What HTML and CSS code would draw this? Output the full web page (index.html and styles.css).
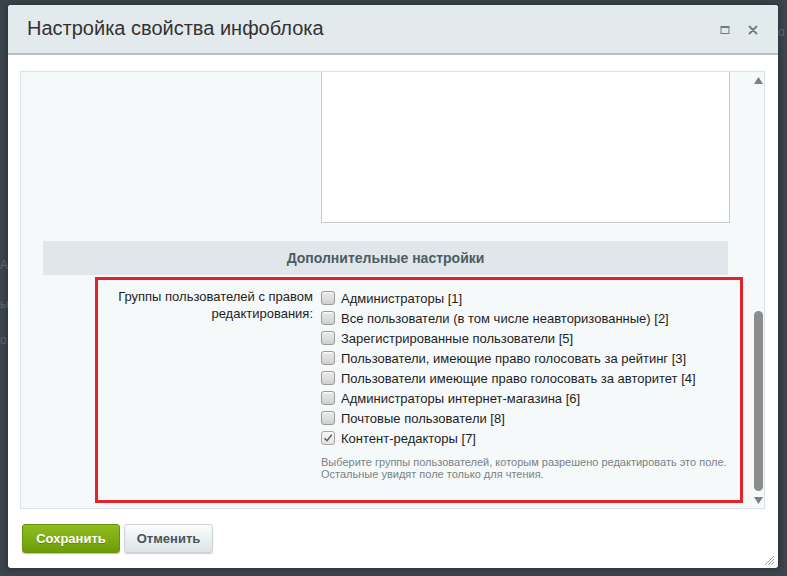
FILE: index.html
```html
<!DOCTYPE html>
<html lang="ru">
<head>
<meta charset="utf-8">
<title>Настройка свойства инфоблока</title>
<link rel="stylesheet" href="styles.css">
</head>
<body>
<div class="page">
  <div class="page-edge left">
    <span class="frag f1">А</span>
    <span class="frag f2">ы</span>
    <span class="frag f3">о</span>
  </div>
  <div class="page-edge right">
    <span class="frag f4">о</span>
  </div>
</div>

<div class="dialog">
  <div class="dialog-head">
    <div class="dialog-title">Настройка свойства инфоблока</div>
    <div class="dialog-tools">
      <svg class="tool" width="10" height="10" viewBox="0 0 10 10"><rect x="1" y="1.5" width="8" height="7" fill="none" stroke="#6f7a82" stroke-width="1"/><rect x="1" y="1" width="8" height="2" fill="#6f7a82"/></svg>
      <svg class="tool" width="10" height="10" viewBox="0 0 10 10"><path d="M1.5 1.5 L8.5 8.5 M8.5 1.5 L1.5 8.5" stroke="#6f7a82" stroke-width="1.8" stroke-linecap="round"/></svg>
    </div>
  </div>

  <div class="dialog-body">
    <div class="content-box">
      <div class="scroll-area">
        <div class="ta-row">
          <div class="ta-label"></div>
          <div class="ta-box"></div>
        </div>
        <div class="section-head">Дополнительные настройки</div>
        <div class="highlight">
          <div class="field-label">Группы пользователей с правом редактирования:</div>
          <div class="field-value">
            <label class="cb-row"><span class="cb"></span>Администраторы [1]</label>
            <label class="cb-row"><span class="cb"></span>Все пользователи (в том числе неавторизованные) [2]</label>
            <label class="cb-row"><span class="cb"></span>Зарегистрированные пользователи [5]</label>
            <label class="cb-row"><span class="cb"></span>Пользователи, имеющие право голосовать за рейтинг [3]</label>
            <label class="cb-row"><span class="cb"></span>Пользователи имеющие право голосовать за авторитет [4]</label>
            <label class="cb-row"><span class="cb"></span>Администраторы интернет-магазина [6]</label>
            <label class="cb-row"><span class="cb"></span>Почтовые пользователи [8]</label>
            <label class="cb-row"><span class="cb checked"><svg width="12" height="12" viewBox="0 0 12 12"><path d="M2.5 6.2 L5 8.7 L9.8 2.8" fill="none" stroke="#5a5a5a" stroke-width="1.4"/></svg></span>Контент-редакторы [7]</label>
            <div class="hint">Выберите группы пользователей, которым разрешено редактировать это поле.<br>Остальные увидят поле только для чтения.</div>
          </div>
        </div>
      </div>
      <div class="scrollbar">
        <div class="sb-btn"><svg width="9" height="7" viewBox="0 0 9 7"><path d="M4.5 0 L9 7 L0 7 Z" fill="#7e7e7e"/></svg></div>
        <div class="sb-track"><div class="sb-thumb"></div></div>
        <div class="sb-btn"><svg width="9" height="7" viewBox="0 0 9 7"><path d="M0 0 L9 0 L4.5 7 Z" fill="#7e7e7e"/></svg></div>
      </div>
    </div>

    <div class="buttons">
      <button class="btn btn-save">Сохранить</button>
      <button class="btn btn-cancel">Отменить</button>
    </div>
  </div>

  <svg class="grip" width="11" height="11" viewBox="0 0 11 11"><path d="M10 1 L1 10 M10 4 L4 10 M10 7 L7 10" stroke="#9aa0a4" stroke-width="1"/></svg>
</div>
</body>
</html>
```
FILE: styles.css
```css
* { box-sizing: border-box; }
html, body {
  margin: 0;
  padding: 0;
  width: 787px;
  height: 576px;
  overflow: hidden;
}
body {
  background: #3b434b;
  font-family: "Liberation Sans", Arial, sans-serif;
  position: relative;
}

.page {
  display: flex;
  justify-content: space-between;
  height: 576px;
}
.page-edge {
  width: 9px;
  position: relative;
}
.frag {
  position: absolute;
  left: 0;
  white-space: nowrap;
  color: #5f676e;
  font-size: 12px;
}
.f1 { top: 258px; }
.f2 { top: 297px; }
.f3 { top: 333px; }
.f4 { top: 25px; }

.dialog {
  position: absolute;
  left: 8px;
  top: 5px;
  width: 770px;
  height: 563px;
  background: #fff;
  border-radius: 3px;
  box-shadow: 0 0 6px rgba(0,0,0,0.35);
  display: flex;
  flex-direction: column;
  overflow: hidden;
}

.dialog-head {
  height: 50px;
  flex: none;
  background: #e3eaee;
  border-bottom: 2px solid #b9bfc3;
  display: flex;
  align-items: center;
  justify-content: space-between;
  padding: 0 20px 0 19px;
}
.dialog-title {
  font-size: 20px;
  color: #333;
  margin-top: -1px;
}
.dialog-tools {
  display: flex;
  gap: 18px;
  align-items: center;
  margin-top: 2px;
}
.tool { display: block; }

.dialog-body {
  flex: 1;
  display: flex;
  flex-direction: column;
  padding: 16px 13px 0 12px;
}

.content-box {
  height: 438px;
  border: 1px solid #d9e1e4;
  background: #f5f9f9;
  display: flex;
}
.scroll-area {
  flex: 1;
  overflow: hidden;
}

.ta-row {
  display: flex;
  height: 151px;
}
.ta-label { width: 300px; }
.ta-box {
  width: 409px;
  background: #fff;
  border: 1px solid #c6cdd2;
  border-top: none;
}

.section-head {
  margin: 18px 22px 0 22px;
  height: 34px;
  background: #e0e6e9;
  color: #4e5c63;
  font-weight: bold;
  font-size: 14px;
  display: flex;
  align-items: center;
  justify-content: center;
}

.highlight {
  margin: 2px 0 0 74px;
  width: 648px;
  height: 226px;
  border: 3px solid #e3232b;
  display: flex;
  padding-top: 8px;
}
.field-label {
  width: 223px;
  padding-right: 8px;
  text-align: right;
  font-size: 13px;
  line-height: 17px;
  color: #1e1e1e;
}
.field-value {
  flex: 1;
  display: flex;
  flex-direction: column;
}
.cb-row {
  display: flex;
  align-items: center;
  gap: 6px;
  height: 20px;
  font-size: 13px;
  color: #1e1e1e;
  white-space: nowrap;
}
.cb {
  width: 14px;
  height: 14px;
  flex: none;
  border: 1px solid #9b9b9b;
  border-radius: 3px;
  background: linear-gradient(#ececec, #cfcfcf);
  box-shadow: inset 0 1px 0 #fafafa;
  display: flex;
  align-items: center;
  justify-content: center;
}
.cb.checked {
  background: linear-gradient(#f7f7f7, #e2e2e2);
  border-color: #a8a8a8;
}
.cb svg { display: block; }
.hint {
  margin-top: 8px;
  font-size: 11px;
  line-height: 12px;
  color: #7b8185;
}

.scrollbar {
  width: 14px;
  flex: none;
  display: flex;
  flex-direction: column;
}
.sb-btn {
  height: 16px;
  flex: none;
  display: flex;
  align-items: center;
  justify-content: center;
  padding-left: 2px;
}
.sb-track {
  flex: 1;
  display: flex;
  flex-direction: column;
  align-items: center;
  padding-left: 2px;
}
.sb-thumb {
  margin-top: 223px;
  width: 9px;
  height: 180px;
  border-radius: 5px;
  background: #8c8c8c;
}

.buttons {
  display: flex;
  gap: 4px;
  margin-top: 15px;
  padding-left: 2px;
}
.btn {
  height: 29px;
  font-family: "Liberation Sans", Arial, sans-serif;
  font-size: 13px;
  font-weight: bold;
  border-radius: 3px;
  cursor: pointer;
  padding: 0;
}
.btn-save {
  width: 98px;
  color: #fff;
  background: linear-gradient(#8fbd1f, #6e9c07);
  border: 1px solid #6a9206;
  box-shadow: 0 1px 1px rgba(0,0,0,0.25);
  text-shadow: 0 1px 0 rgba(60,80,0,0.4);
}
.btn-cancel {
  width: 89px;
  color: #4a545b;
  background: linear-gradient(#fbfcfc, #dde3e6);
  border: 1px solid #cdd3d7;
  box-shadow: 0 1px 1px rgba(0,0,0,0.2);
}

.grip {
  position: absolute;
  right: 3px;
  bottom: 2px;
}
```
